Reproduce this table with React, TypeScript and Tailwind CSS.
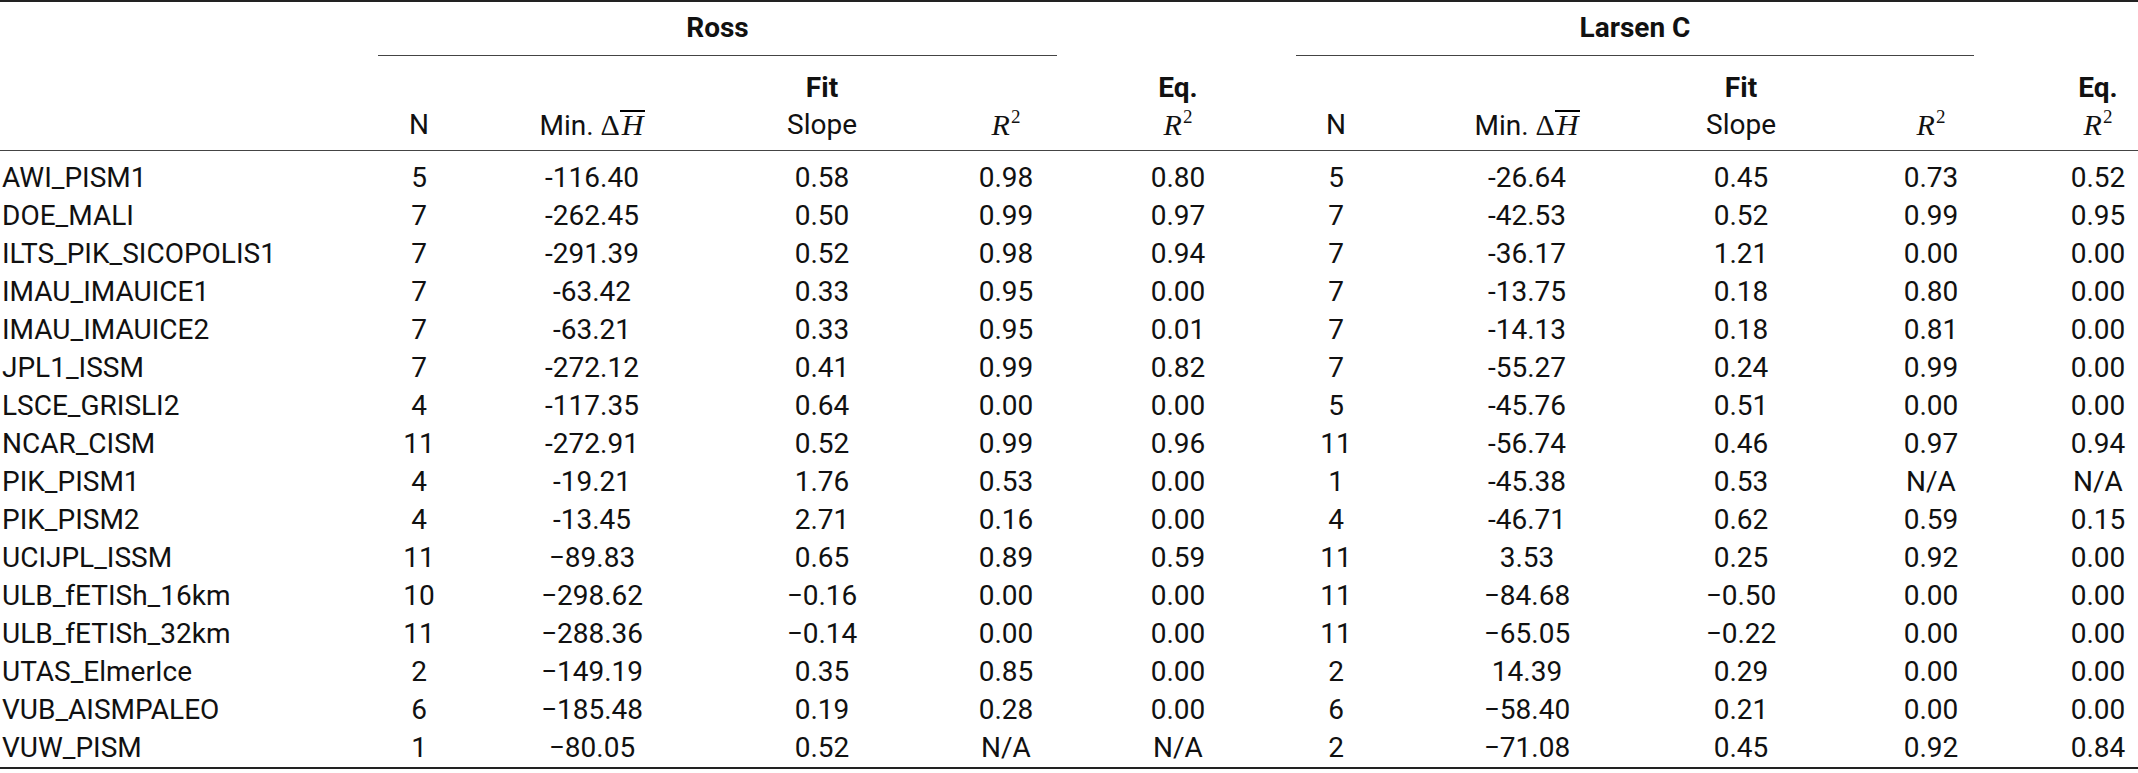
import React from "react";

type Row = [string, string, string, string, string, string, string, string, string, string, string];

const rows: Row[] = [
  ["AWI_PISM1", "5", "-116.40", "0.58", "0.98", "0.80", "5", "-26.64", "0.45", "0.73", "0.52"],
  ["DOE_MALI", "7", "-262.45", "0.50", "0.99", "0.97", "7", "-42.53", "0.52", "0.99", "0.95"],
  ["ILTS_PIK_SICOPOLIS1", "7", "-291.39", "0.52", "0.98", "0.94", "7", "-36.17", "1.21", "0.00", "0.00"],
  ["IMAU_IMAUICE1", "7", "-63.42", "0.33", "0.95", "0.00", "7", "-13.75", "0.18", "0.80", "0.00"],
  ["IMAU_IMAUICE2", "7", "-63.21", "0.33", "0.95", "0.01", "7", "-14.13", "0.18", "0.81", "0.00"],
  ["JPL1_ISSM", "7", "-272.12", "0.41", "0.99", "0.82", "7", "-55.27", "0.24", "0.99", "0.00"],
  ["LSCE_GRISLI2", "4", "-117.35", "0.64", "0.00", "0.00", "5", "-45.76", "0.51", "0.00", "0.00"],
  ["NCAR_CISM", "11", "-272.91", "0.52", "0.99", "0.96", "11", "-56.74", "0.46", "0.97", "0.94"],
  ["PIK_PISM1", "4", "-19.21", "1.76", "0.53", "0.00", "1", "-45.38", "0.53", "N/A", "N/A"],
  ["PIK_PISM2", "4", "-13.45", "2.71", "0.16", "0.00", "4", "-46.71", "0.62", "0.59", "0.15"],
  ["UCIJPL_ISSM", "11", "\u221289.83", "0.65", "0.89", "0.59", "11", "3.53", "0.25", "0.92", "0.00"],
  ["ULB_fETISh_16km", "10", "\u2212298.62", "\u22120.16", "0.00", "0.00", "11", "\u221284.68", "\u22120.50", "0.00", "0.00"],
  ["ULB_fETISh_32km", "11", "\u2212288.36", "\u22120.14", "0.00", "0.00", "11", "\u221265.05", "\u22120.22", "0.00", "0.00"],
  ["UTAS_ElmerIce", "2", "\u2212149.19", "0.35", "0.85", "0.00", "2", "14.39", "0.29", "0.00", "0.00"],
  ["VUB_AISMPALEO", "6", "\u2212185.48", "0.19", "0.28", "0.00", "6", "\u221258.40", "0.21", "0.00", "0.00"],
  ["VUW_PISM", "1", "\u221280.05", "0.52", "N/A", "N/A", "2", "\u221271.08", "0.45", "0.92", "0.84"],
];

const cols = "grid grid-cols-[346px_146px_200px_260px_108px_236px_80px_302px_126px_254px_80px]";

// R² in serif italic, as the math font in the reference
function RSquared() {
  return (
    <span className="font-['Liberation_Serif',serif] text-[30px]">
      <span className="italic">R</span>
      <span className="inline-block text-[19px] align-top -mt-[3px] ml-[1px]">2</span>
    </span>
  );
}

function MinDeltaH() {
  return (
    <span>
      Min.{" "}
      <span className="font-['Liberation_Serif',serif] text-[30px]">
        {"\u0394"}
        <span className="inline-block italic border-t-[2px] border-black leading-[25px] pl-[2px] pr-[1px]">H</span>
      </span>
    </span>
  );
}

function SubHead({ top, bottom }: { top?: string; bottom: React.ReactNode }) {
  return (
    <div className="flex flex-col items-center">
      <div className="h-[36px] flex items-center font-bold">{top}</div>
      <div className="h-[38px] flex items-center">{bottom}</div>
    </div>
  );
}

export default function App() {
  return (
    <div className="w-[2138px] bg-white text-[#111] font-[Roboto,sans-serif] text-[28px] leading-none">
      <div className="border-t-2 border-[#222]">
        {/* group titles */}
        <div className={cols + " h-[54px]"}>
          <div className="col-start-2 col-span-4 ml-[32px] mr-[3px] border-b border-[#444] flex items-center justify-center font-bold pb-[2px]">
            Ross
          </div>
          <div className="col-start-7 col-span-4 mr-[84px] border-b border-[#444] flex items-center justify-center font-bold pb-[2px]">
            Larsen C
          </div>
        </div>

        {/* column headers */}
        <div className={cols + " pt-[14px] pb-[6px] border-b border-[#444]"}>
          <div />
          <SubHead bottom="N" />
          <SubHead bottom={<MinDeltaH />} />
          <SubHead top="Fit" bottom="Slope" />
          <SubHead bottom={<RSquared />} />
          <SubHead top="Eq." bottom={<RSquared />} />
          <SubHead bottom="N" />
          <SubHead bottom={<MinDeltaH />} />
          <SubHead top="Fit" bottom="Slope" />
          <SubHead bottom={<RSquared />} />
          <SubHead top="Eq." bottom={<RSquared />} />
        </div>

        {/* body */}
        <div className="pt-[8px] border-b-2 border-[#222]">
          {rows.map((r) => (
            <div key={r[0]} className={cols + " h-[38px] items-center"}>
              {r.map((cell, i) => (
                <div key={i} className={i === 0 ? "pl-[2px] whitespace-nowrap" : "text-center whitespace-nowrap"}>
                  {cell}
                </div>
              ))}
            </div>
          ))}
        </div>
      </div>
    </div>
  );
}
